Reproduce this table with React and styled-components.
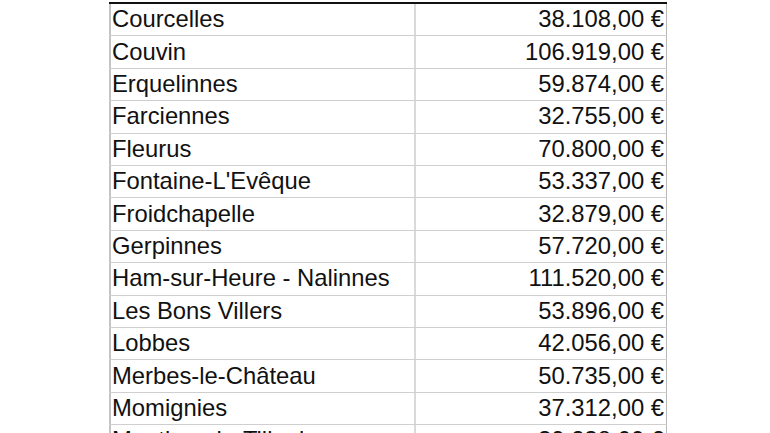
import React from "react";
import styled, { createGlobalStyle } from "styled-components";

const rows = [
  ["Courcelles", "38.108,00 €"],
  ["Couvin", "106.919,00 €"],
  ["Erquelinnes", "59.874,00 €"],
  ["Farciennes", "32.755,00 €"],
  ["Fleurus", "70.800,00 €"],
  ["Fontaine-L'Evêque", "53.337,00 €"],
  ["Froidchapelle", "32.879,00 €"],
  ["Gerpinnes", "57.720,00 €"],
  ["Ham-sur-Heure - Nalinnes", "111.520,00 €"],
  ["Les Bons Villers", "53.896,00 €"],
  ["Lobbes", "42.056,00 €"],
  ["Merbes-le-Château", "50.735,00 €"],
  ["Momignies", "37.312,00 €"],
  ["Montigny-le-Tilleul", "39.238,00 €"],
];

const GlobalStyle = createGlobalStyle`
  html, body {
    margin: 0;
    padding: 0;
    background: #fff;
    overflow: hidden;
  }
  body {
    font-family: "Liberation Sans", Arial, sans-serif;
  }
`;

const Page = styled.div`
  width: 770px;
  height: 433px;
  overflow: hidden;
  padding-top: 2px;
  box-sizing: border-box;
`;

const Sheet = styled.div`
  margin-left: 109px;
  width: 558px;
  border-top: 2px solid #111;
`;

const Row = styled.div`
  display: grid;
  grid-template-columns: 305px 253px;
  height: 32.4px;
  box-sizing: border-box;
  border-bottom: 1px solid #cfcfcf;
`;

const Cell = styled.div`
  display: flex;
  align-items: center;
  justify-content: ${(p) => (p.$num ? "flex-end" : "flex-start")};
  padding: ${(p) => (p.$num ? "0 2px 1px 0" : "0 0 1px 1px")};
  border-left: 2px solid ${(p) => (p.$num ? "#dadada" : "#c4c4c4")};
  border-right: ${(p) => (p.$num ? "1px solid #b8b8b8" : "none")};
  font-size: 23.8px;
  color: #111;
  white-space: nowrap;
  overflow: hidden;
  line-height: 1;
`;

export default function App() {
  return (
    <Page>
      <GlobalStyle />
      <Sheet>
        {rows.map(([name, amount]) => (
          <Row key={name}>
            <Cell>{name}</Cell>
            <Cell $num>{amount}</Cell>
          </Row>
        ))}
      </Sheet>
    </Page>
  );
}
